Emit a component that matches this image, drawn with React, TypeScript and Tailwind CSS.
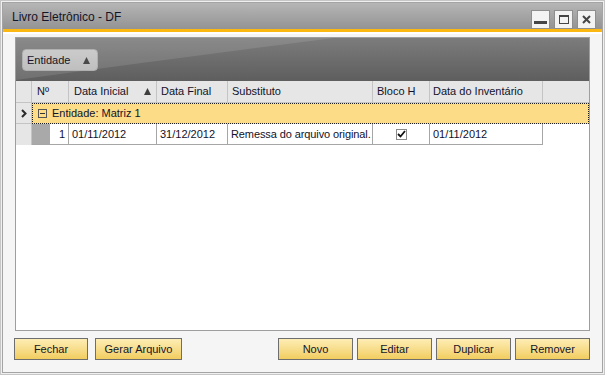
import React from "react";

function YellowButton({ label, w }: { label: string; w: string }) {
  return (
    <div
      className={`${w} h-[22px] border border-[#6e6e6e] bg-gradient-to-b from-[#fdedb4] to-[#f2cd5e] flex items-center justify-center text-[11px] text-[#14142a] whitespace-nowrap`}
    >
      {label}
    </div>
  );
}

function TitleBtn({ children }: { children: React.ReactNode }) {
  return (
    <div className="w-[19px] h-[19px] border border-[#8e8e8e] bg-[#f3f3f3] flex items-center justify-center">
      {children}
    </div>
  );
}

export default function App() {
  return (
    <div className="w-[605px] h-[375px] bg-[#f0f0f0] border border-[#c6c6c6] p-px font-['Liberation_Sans',Arial,sans-serif] text-[11px] text-[#12122a] overflow-hidden whitespace-nowrap">
      <div className="h-full border border-[#a4a4a4] flex flex-col bg-[#f5f5f5]">
        {/* Title bar */}
        <div className="h-[26px] shrink-0 bg-gradient-to-b from-[#b6b6b6] to-[#939393] flex items-center pl-[9px] pr-[6px]">
          <span className="text-[12px] text-[#141428] mt-[2px]">Livro Eletrônico - DF</span>
          <div className="ml-auto flex gap-[4px] mt-[6px]">
            <TitleBtn>
              <svg width="13" height="13" viewBox="0 0 13 13">
                <rect x="0" y="8" width="13" height="3" fill="#454545" />
              </svg>
            </TitleBtn>
            <TitleBtn>
              <svg width="10" height="9" viewBox="0 0 10 9">
                <rect x="0.5" y="0.5" width="9" height="8" fill="none" stroke="#454545" strokeWidth="1" />
                <rect x="0" y="0" width="10" height="2" fill="#454545" />
              </svg>
            </TitleBtn>
            <TitleBtn>
              <svg width="9" height="9" viewBox="0 0 9 9">
                <path d="M1 1 L8 8 M8 1 L1 8" stroke="#454545" strokeWidth="2" />
              </svg>
            </TitleBtn>
          </div>
        </div>
        <div className="h-[3px] shrink-0 bg-[#fbb712]" />
        <div className="h-[2px] shrink-0 bg-white" />

        {/* Body */}
        <div className="flex-1 flex flex-col pt-[3px]">
          {/* Panel */}
          <div className="mx-[12px] h-[294px] border border-[#9e9e9e] flex flex-col bg-white">
            {/* Group-by header */}
            <div className="relative h-[43px] shrink-0 bg-gradient-to-b from-[#7c7c7c] to-[#5e5e5e] pl-[6px] pt-[11px]">
              <svg className="absolute left-0 top-0" width="573" height="43" viewBox="0 0 573 43">
                <path d="M0 0 H318 Q160 20 0 42 Z" fill="#ffffff" fillOpacity="0.11" />
              </svg>
              <div className="relative w-[76px] h-[22px] rounded-[4px] bg-gradient-to-b from-[#cbcbcb] to-[#bfbfbf] border border-[#b0b0b0] flex items-center pl-[4px] text-[#141428]">
                <span>Entidade</span>
                <svg className="ml-auto mr-[7px]" width="7" height="7" viewBox="0 0 7 7">
                  <path d="M3.5 0 L7 7 L0 7 Z" fill="#4a4a4a" />
                </svg>
              </div>
            </div>

            {/* Column header */}
            <div className="h-[22px] shrink-0 flex bg-[#e6e6e6] border-b border-[#c4c4c4]">
              <div className="w-[16px] border-r border-[#c4c4c4]" />
              <div className="w-[37px] border-r border-[#c4c4c4] flex items-center pl-[5px]">Nº</div>
              <div className="w-[88px] border-r border-[#c4c4c4] flex items-center pl-[5px]">
                <span>Data Inicial</span>
                <svg className="ml-auto mr-[5px]" width="7" height="7" viewBox="0 0 7 7">
                  <path d="M3.5 0 L7 7 L0 7 Z" fill="#3e3e3e" />
                </svg>
              </div>
              <div className="w-[71px] border-r border-[#c4c4c4] flex items-center pl-[4px]">Data Final</div>
              <div className="w-[145px] border-r border-[#c4c4c4] flex items-center pl-[4px]">Substituto</div>
              <div className="w-[57px] border-r border-[#c4c4c4] flex items-center pl-[4px]">Bloco H</div>
              <div className="w-[113px] border-r border-[#c4c4c4] flex items-center pl-[3px]">Data do Inventário</div>
              <div className="flex-1" />
            </div>

            {/* Group row */}
            <div className="h-[21px] shrink-0 flex">
              <div className="w-[16px] bg-[#e6e6e6] border-r border-[#c4c4c4] border-b flex items-center justify-center">
                <svg width="6" height="9" viewBox="0 0 6 9">
                  <path d="M1 1 L4.5 4.5 L1 8" fill="none" stroke="#2a2a2a" strokeWidth="2" />
                </svg>
              </div>
              <div className="flex-1 bg-[#fcdc86] border border-dotted border-[#202020] flex items-center pl-[5px]">
                <div className="w-[9px] h-[9px] border border-[#555555] flex items-center justify-center mr-[5px]">
                  <div className="w-[5px] h-px bg-[#333333]" />
                </div>
                <span>Entidade: Matriz 1</span>
              </div>
            </div>

            {/* Data row */}
            <div className="h-[21px] shrink-0 flex">
              <div className="w-[16px] bg-[#e6e6e6] border-r border-[#c4c4c4]" />
              <div className="w-[37px] border-r border-b border-[#a6a6a6] flex">
                <div className="w-[18px] bg-[#a9a9a9]" />
                <div className="flex-1 flex items-center justify-end pr-[3px]">1</div>
              </div>
              <div className="w-[88px] border-r border-b border-[#a6a6a6] flex items-center pl-[3px]">01/11/2012</div>
              <div className="w-[71px] border-r border-b border-[#a6a6a6] flex items-center pl-[3px]">31/12/2012</div>
              <div className="w-[145px] border-r border-b border-[#a6a6a6] flex items-center pl-[3px] whitespace-nowrap overflow-hidden tracking-[-0.1px]">
                Remessa do arquivo original.
              </div>
              <div className="w-[57px] border-r border-b border-[#a6a6a6] flex items-center justify-center">
                <div className="w-[11px] h-[11px] border border-[#8a8a8a] bg-white flex items-center justify-center">
                  <svg width="9" height="8" viewBox="0 0 9 8">
                    <path d="M1 4 L3.5 6.5 L8 1" fill="none" stroke="#111111" strokeWidth="1.8" />
                  </svg>
                </div>
              </div>
              <div className="w-[113px] border-r border-b border-[#a6a6a6] flex items-center pl-[3px]">01/11/2012</div>
              <div className="flex-1" />
            </div>

            <div className="flex-1 bg-white" />
          </div>

          {/* Buttons */}
          <div className="mt-[7px] flex pl-[11px] pr-[12px]">
            <YellowButton label="Fechar" w="w-[74px]" />
            <div className="w-[7px]" />
            <YellowButton label="Gerar Arquivo" w="w-[87px]" />
            <div className="ml-auto flex gap-[4px]">
              <YellowButton label="Novo" w="w-[75px]" />
              <YellowButton label="Editar" w="w-[75px]" />
              <YellowButton label="Duplicar" w="w-[75px]" />
              <YellowButton label="Remover" w="w-[75px]" />
            </div>
          </div>
        </div>
      </div>
    </div>
  );
}
